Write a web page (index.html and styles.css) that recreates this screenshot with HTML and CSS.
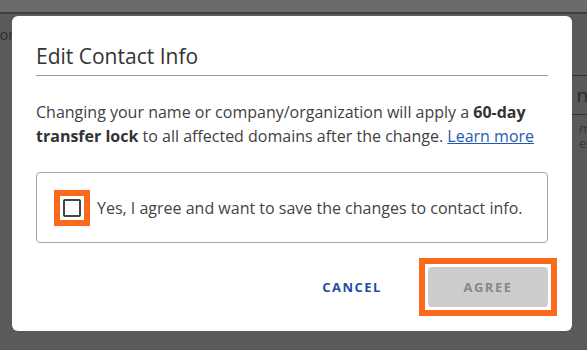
FILE: index.html
```html
<!DOCTYPE html>
<html lang="en">

<head>
    <meta charset="UTF-8" />
    <meta name="viewport" content="width=device-width, initial-scale=1.0" />
    <title>Edit Contact Info</title>
    <link rel="stylesheet" href="styles.css">
</head>

<body>
    <!-- Pagina atras do overlay -->
    <div class="page">
        <div class="topbar"></div>
        <div class="page-body">
            <div class="page-left">for</div>
            <div class="page-right">
                <div class="panel-head">Domain name</div>
                <div class="panel-row">
                    <div>mail</div>
                    <div>ecom</div>
                </div>
            </div>
        </div>
    </div>

    <!-- Modal -->
    <div class="dialog" role="dialog">
        <h2 class="dialog-title">Edit Contact Info</h2>

        <p class="dialog-text">
            Changing your name or company/organization will apply a <b>60-day transfer lock</b>
            to all affected domains after the change. <a href="#">Learn more</a>
        </p>

        <label class="agree-box">
            <span class="mark"><input type="checkbox"></span>
            <span>Yes, I agree and want to save the changes to contact info.</span>
        </label>

        <div class="actions">
            <button type="button" class="btn btn-link">CANCEL</button>
            <span class="mark"><button type="button" class="btn btn-disabled">AGREE</button></span>
        </div>
    </div>
</body>

</html>
```

FILE: styles.css
```css
* {
    box-sizing: border-box;
}

body {
    font-family: "Open Sans", "Liberation Sans", sans-serif;
    margin: 0;
    background-color: #5a5a5a;
    height: 350px;
    overflow: hidden;
}

/* pagina de fundo */
.page {
    color: #2c2c2c;
}

.topbar {
    height: 14px;
    background-color: #6a6a6a;
    border-bottom: 2px solid #3f3f3f;
}

.page-body {
    display: flex;
    justify-content: space-between;
}

.page-left {
    font-size: 14px;
    margin-top: 11px;
    margin-left: -5px;
}

.page-right {
    width: 60px;
    margin-top: 61px;
    margin-right: -40px;
}

.panel-head {
    font-size: 19px;
    line-height: 38px;
    border-top: 1px solid #333;
    border-bottom: 1px solid #333;
    padding-left: 3px;
    white-space: nowrap;
    direction: rtl;
    text-align: left;
    overflow: hidden;
}

.panel-row {
    font-size: 13px;
    line-height: 15px;
    padding-top: 6px;
    padding-left: 12px;
    color: #363636;
}

/* modal */
.dialog {
    position: absolute;
    left: 12px;
    top: 16px;
    width: 560px;
    background-color: #fff;
    border-radius: 6px;
    padding: 26px 24px 24px;
}

.dialog-title {
    margin: 0;
    font-size: 21px;
    font-weight: 400;
    line-height: 28px;
    color: #333;
    padding-bottom: 5px;
    border-bottom: 1px solid #9a9a9a;
}

.dialog-text {
    margin: 24px 0 0;
    font-size: 16px;
    line-height: 24px;
    color: #3f3f3f;
}

.dialog-text b {
    font-weight: 700;
    color: #333;
}

.dialog-text a {
    color: #1f5bb1;
    text-decoration: underline;
}

.agree-box {
    display: flex;
    align-items: center;
    gap: 16px;
    height: 71px;
    margin-top: 24px;
    padding: 0 20px 0 26px;
    border: 1px solid #a5a5a5;
    border-radius: 4px;
    font-size: 16px;
    color: #444;
    white-space: nowrap;
    cursor: pointer;
}

.agree-box input {
    appearance: none;
    -webkit-appearance: none;
    display: block;
    width: 18px;
    height: 18px;
    margin: 0;
    border: 2px solid #444;
    border-radius: 2px;
    background: #fff;
}

/* marcacao laranja (anotacao) */
.mark {
    display: inline-flex;
    flex-shrink: 0;
    border: 6px solid #fb6a1a;
    padding: 3px;
    margin: -9px;
    background: #fff;
}

.actions {
    display: flex;
    justify-content: flex-end;
    align-items: center;
    gap: 16px;
    margin-top: 24px;
}

.btn {
    width: 120px;
    height: 40px;
    border: none;
    border-radius: 4px;
    font-family: inherit;
    font-size: 13px;
    font-weight: 700;
    letter-spacing: 1.5px;
    cursor: pointer;
}

.btn-link {
    background: transparent;
    color: #1b4f9f;
}

.btn-disabled {
    background-color: #cccccc;
    color: #878787;
}
```
